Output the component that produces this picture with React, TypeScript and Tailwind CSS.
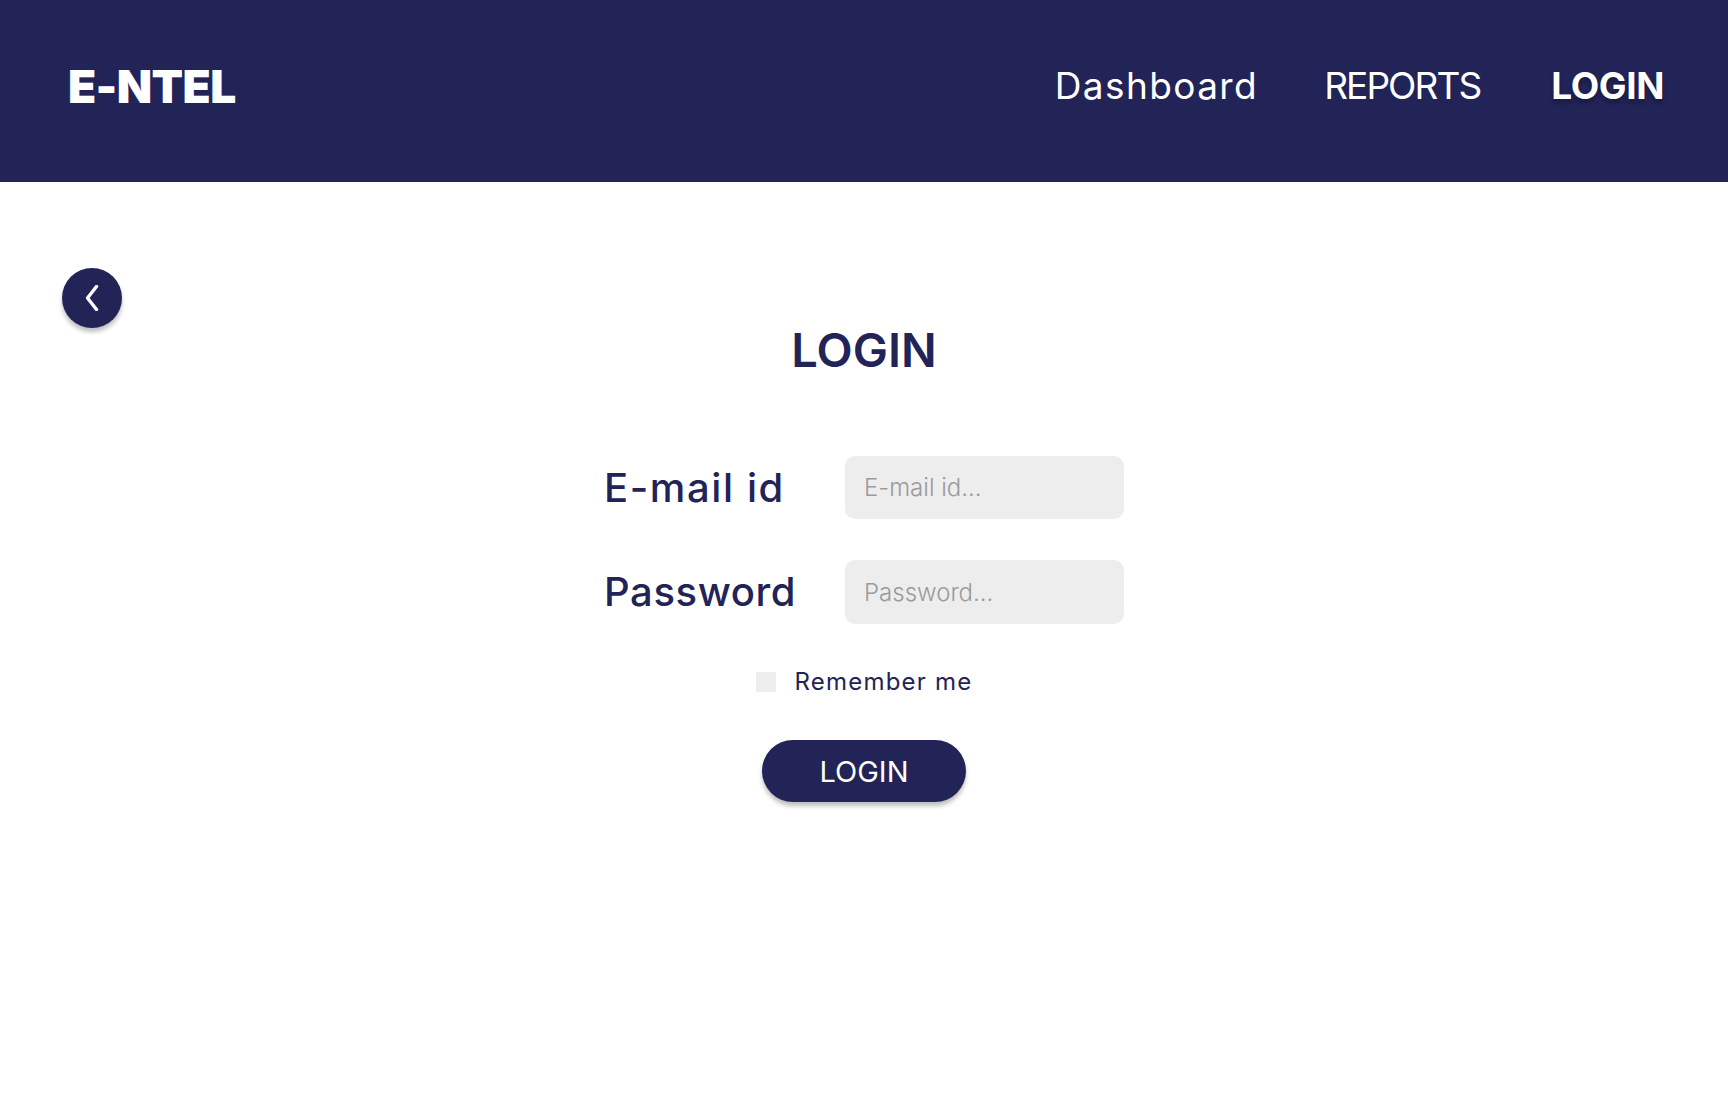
import React from 'react';

const navy = 'text-[#222357]';

function BackButton() {
  return (
    <button className="w-[60px] h-[60px] rounded-full bg-[#222357] flex items-center justify-center shadow-[0_4px_4px_rgba(0,0,0,0.25)]">
      <svg width="14" height="26" viewBox="0 0 14 26" fill="none">
        <path d="M11.5 1.5L2.5 13L11.5 24.5" stroke="white" strokeWidth="3.4" strokeLinecap="round" strokeLinejoin="round" />
      </svg>
    </button>
  );
}

export default function App() {
  return (
    <div className="min-h-screen bg-white font-['Inter','Noto_Sans',sans-serif]">
      <header className="h-[182px] bg-[#222357] flex items-center justify-between pl-[68px] pr-[64px]">
        <div className="text-white text-[46px] font-black leading-none tracking-[-0.6px] -mt-[10px]">E-NTEL</div>
        <nav className="flex items-center text-white text-[37px] leading-none -mt-[12px]">
          <a className="font-normal tracking-[1.4px]">Dashboard</a>
          <a className="font-normal tracking-[-1.9px] ml-[66px]">REPORTS</a>
          <a className="font-bold tracking-[-0.4px] ml-[71px] [text-shadow:0_4px_4px_rgba(0,0,0,0.25)]">LOGIN</a>
        </nav>
      </header>

      <main className="px-[62px] pt-[86px]">
        <BackButton />

        <div className="flex flex-col items-center">
          <h1 className={`${navy} text-[47px] font-semibold leading-none -mt-[2px]`}>LOGIN</h1>

          <form className="mt-[83px] flex flex-col gap-[41px]" onSubmit={(e) => e.preventDefault()}>
            <div className="grid grid-cols-[241px_279px] items-center">
              <label className={`${navy} text-[40px] font-medium leading-none tracking-[1.6px]`}>E-mail id</label>
              <input
                type="email"
                placeholder="E-mail id..."
                className="h-[63px] rounded-[10px] bg-[#ededed] px-[19px] text-[24px] font-light text-[#555] placeholder:text-[#9a9a9a] outline-none"
              />
            </div>
            <div className="grid grid-cols-[241px_279px] items-center">
              <label className={`${navy} text-[40px] font-medium leading-none tracking-[0.6px]`}>Password</label>
              <input
                type="password"
                placeholder="Password..."
                className="h-[64px] rounded-[10px] bg-[#ededed] px-[19px] text-[24px] font-light text-[#555] placeholder:text-[#9a9a9a] outline-none"
              />
            </div>
          </form>

          <label className="mt-[46px] flex items-center gap-[19px] cursor-pointer">
            <span className="w-[20px] h-[20px] bg-[#ededed] block" />
            <span className={`${navy} text-[24px] leading-none tracking-[1.2px]`}>Remember me</span>
          </label>

          <button className="mt-[46px] w-[204px] h-[62px] rounded-full bg-[#222357] text-white text-[29px] leading-none shadow-[0_4px_4px_rgba(0,0,0,0.25)]">
            LOGIN
          </button>
        </div>
      </main>
    </div>
  );
}
